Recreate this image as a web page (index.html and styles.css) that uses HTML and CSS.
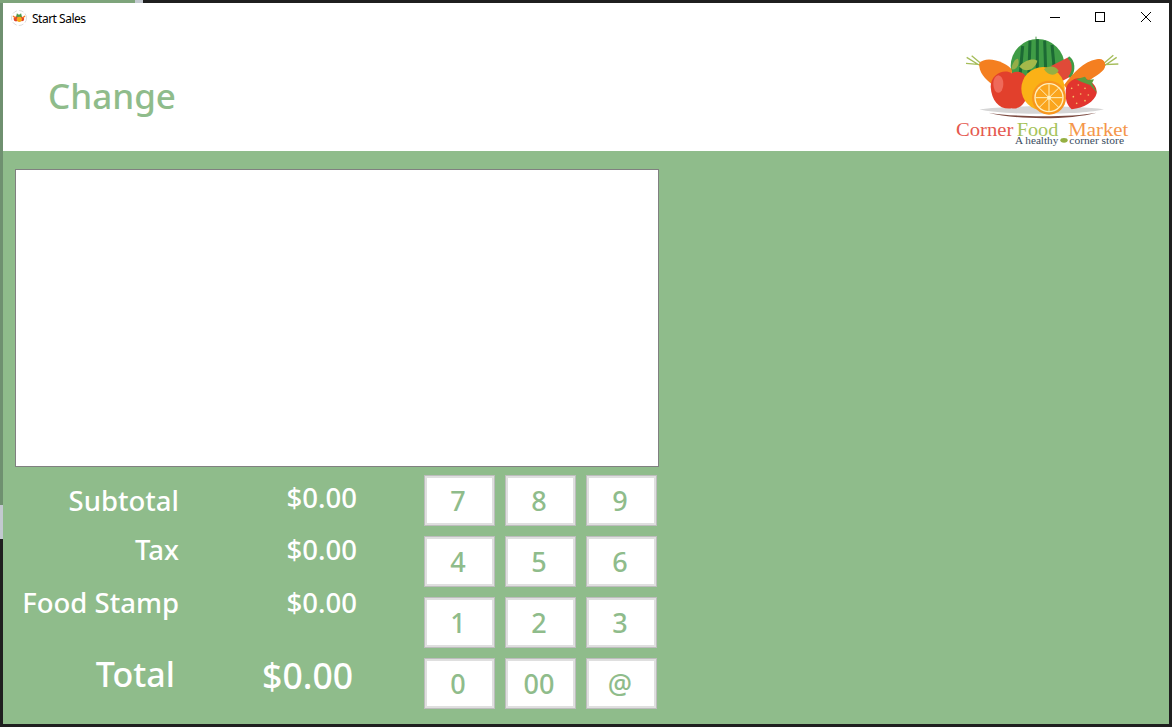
FILE: index.html
```html
<!DOCTYPE html>
<html lang="en">
<head>
    <meta charset="UTF-8">
    <title>Start Sales</title>
    <link rel="stylesheet" href="styles.css">
</head>
<body>
<div class="window">
    <div class="titlebar">
        <svg class="app-icon" width="16" height="16" viewBox="0 0 16 16">
            <circle cx="8" cy="8" r="7.5" fill="#fff" stroke="#bbb" stroke-width="0.5" stroke-dasharray="5 2"/>
            <path d="M6 3 C7 5 9 5 10 3 L11 7 L5 7z" fill="#4f9a4a"/>
            <circle cx="5" cy="9" r="2.4" fill="#e0452c"/>
            <circle cx="11" cy="9" r="2.2" fill="#e0452c"/>
            <circle cx="8.3" cy="9.3" r="2.6" fill="#f7a81b"/>
            <path d="M2 6 L4.5 8 M14 6 L11.5 8" stroke="#f47b20" stroke-width="1.4"/>
        </svg>
        <span class="title">Start Sales</span>
        <div class="win-controls">
            <svg width="46" height="28" viewBox="0 0 46 28"><path d="M19 14.5h10" stroke="#000"/></svg>
            <svg width="46" height="28" viewBox="0 0 46 28"><rect x="18.5" y="9.5" width="9" height="9" fill="none" stroke="#000"/></svg>
            <svg width="46" height="28" viewBox="0 0 46 28"><path d="M18 9l10 10M28 9l-10 10" stroke="#000"/></svg>
        </div>
    </div>

    <header class="header">
        <h1>Change</h1>
        <svg class="logo" width="185" height="120" viewBox="0 0 555 360">
            <!-- plate -->
            <path d="M88 238 C180 226 370 226 462 238 C400 256 150 256 88 238z" fill="#d6d6d6"/>
            <path d="M115 248 C200 262 360 262 440 248 C360 270 200 270 115 248z" fill="#7b4a40"/>
            <!-- carrot greens -->
            <path d="M92 104 L48 100 M92 100 L65 77 M92 108 L50 82" stroke="#a5bd5a" stroke-width="4" fill="none"/>
            <path d="M462 104 L505 102 M462 100 L490 76 M462 108 L500 82" stroke="#a5bd5a" stroke-width="4" fill="none"/>
            <!-- watermelon -->
            <circle cx="263" cy="108" r="81" fill="#3f9c46"/>
            <path d="M258 20 L258 34" stroke="#4f9a4a" stroke-width="3"/>
            <path d="M208 160 L218 48 M236 150 L240 32 M262 150 L262 28 M288 150 L284 32 M316 150 L306 45" stroke="#1c6a34" stroke-width="9" fill="none"/>
            <path d="M303 108 L355 82 L372 112 L358 142 L338 152z" fill="#e04a38"/>
            <path d="M355 82 C370 92 376 120 358 142" stroke="#3f9c46" stroke-width="8" fill="none"/>
            <!-- carrots -->
            <path d="M88 100 C100 85 130 85 160 100 C180 110 190 120 185 130 L130 165 C105 150 85 125 88 100z" fill="#f47f20"/>
            <path d="M465 100 C470 120 450 130 420 150 L350 176 L342 165 C370 130 400 95 440 88 C455 85 462 90 465 100z" fill="#f47f20"/>
            <!-- apple -->
            <path d="M122 170 C122 130 165 115 185 130 C210 118 235 130 235 170 C235 215 210 240 185 235 C150 240 125 215 122 170z" fill="#e2402c"/>
            <ellipse cx="145" cy="162" rx="15" ry="26" fill="#ef6a5a"/>
            <!-- leaves -->
            <path d="M208 110 C225 88 250 85 262 92 C258 112 232 134 208 110z" fill="#a4b94a"/>
            <path d="M184 118 C186 100 196 85 204 86 C210 100 202 122 184 118z" fill="#94ad48"/>
            <!-- yellow fruit -->
            <circle cx="279" cy="176" r="65" fill="#fbb116"/>
            <path d="M282 118 C295 106 315 106 326 122 C316 140 294 138 282 118z" fill="#95b042"/>
            <!-- strawberry -->
            <path d="M347 190 C345 160 370 140 400 145 C425 150 442 170 440 190 C435 215 400 235 365 238 C350 225 347 210 347 190z" fill="#e2352e"/>
            <g fill="#f4c56a">
                <circle cx="365" cy="175" r="2.5"/><circle cx="385" cy="165" r="2.5"/><circle cx="405" cy="175" r="2.5"/>
                <circle cx="370" cy="200" r="2.5"/><circle cx="392" cy="192" r="2.5"/><circle cx="415" cy="195" r="2.5"/>
                <circle cx="380" cy="220" r="2.5"/><circle cx="405" cy="212" r="2.5"/>
            </g>
            <path d="M378 148 L405 140 L412 150 L432 148 L426 160 L442 190 L420 165 L395 156z" fill="#5c9c3f"/>
            <!-- orange slice -->
            <circle cx="297" cy="203" r="51" fill="#f8961d"/>
            <circle cx="297" cy="203" r="44" fill="#fff0c0"/>
            <circle cx="297" cy="203" r="40" fill="#fba51d"/>
            <path d="M297 163v80M257 203h80M269 175l56 56M325 175l-56 56" stroke="#fff0c0" stroke-width="3"/>
            <circle cx="297" cy="203" r="6" fill="#fff0c0"/>
            <!-- wordmark -->
            <text class="logo-word" x="18" y="317" fill="#e5594f" textLength="172" lengthAdjust="spacingAndGlyphs">Corner</text>
            <text class="logo-word" x="200" y="317" fill="#a5c35a" textLength="125" lengthAdjust="spacingAndGlyphs">Food</text>
            <text class="logo-word" x="355" y="317" fill="#f4964a" textLength="180" lengthAdjust="spacingAndGlyphs">Market</text>
            <text class="logo-tag" x="195" y="343" fill="#3a4d61" textLength="130" lengthAdjust="spacingAndGlyphs">A healthy</text>
            <text class="logo-tag" x="358" y="343" fill="#3a4d61" textLength="164" lengthAdjust="spacingAndGlyphs">corner store</text>
            <ellipse cx="342" cy="331" rx="11" ry="7" fill="#95b042"/>
        </svg>
    </header>

    <main class="content">
        <div class="left-col">
            <div class="list-box"></div>
            <div class="bottom">
                <div class="totals">
                    <div class="row subtotal"><span class="lbl">Subtotal</span><span class="amt">$0.00</span></div>
                    <div class="row tax"><span class="lbl">Tax</span><span class="amt">$0.00</span></div>
                    <div class="row stamp"><span class="lbl">Food Stamp</span><span class="amt">$0.00</span></div>
                    <div class="row total"><span class="lbl">Total</span><span class="amt">$0.00</span></div>
                </div>
                <div class="keypad">
                    <button>7</button><button>8</button><button>9</button>
                    <button>4</button><button>5</button><button>6</button>
                    <button>1</button><button>2</button><button>3</button>
                    <button>0</button><button>00</button><button>@</button>
                </div>
            </div>
        </div>
    </main>
</div>
</body>
</html>
```
FILE: styles.css
```css
html, body {
    margin: 0;
    height: 100%;
    overflow: hidden;
}

/* the desktop behind the window shows through its thin border */
body {
    background:
        linear-gradient(#7ea47b, #7ea47b) 0 0 / 135px 3px no-repeat,
        linear-gradient(#c3c9d0, #c3c9d0) 135px 0 / 8px 3px no-repeat,
        linear-gradient(#6f9070, #6f9070) 0 0 / 3px 505px no-repeat,
        linear-gradient(#c3c9d0, #c3c9d0) 0 505px / 3px 34px no-repeat,
        #1f1f1f;
    font-family: "Noto Sans", sans-serif;
}

.window {
    box-sizing: border-box;
    width: 1166px;
    height: 721px;
    margin: 3px;
    display: flex;
    flex-direction: column;
    background-color: #8fbc8b;
}

.titlebar {
    height: 30px;
    background-color: #ffffff;
    display: flex;
    align-items: center;
    padding-left: 8px;
    flex-shrink: 0;
}

.app-icon {
    margin-right: 5px;
}

.title {
    font-size: 12px;
    color: #000000;
    letter-spacing: -0.5px;
}

.win-controls {
    margin-left: auto;
    display: flex;
    height: 28px;
    align-self: flex-start;
}

.header {
    height: 118px;
    background-color: #ffffff;
    display: flex;
    justify-content: space-between;
    flex-shrink: 0;
}

.header h1 {
    margin: 39px 0 0 45px;
    font-size: 35px;
    line-height: 48px;
    font-weight: 500;
    color: #8fbc8b;
}

.logo {
    margin: -3px 34px 0 0;
}

.logo-word {
    font-family: "Liberation Serif", serif;
    font-size: 54px;
}

.logo-tag {
    font-family: "Liberation Serif", serif;
    font-size: 29px;
}

.content {
    flex: 1;
    padding: 18px 0 0 12px;
}

.left-col {
    width: 644px;
}

.list-box {
    box-sizing: border-box;
    height: 298px;
    background-color: #ffffff;
    border: 1px solid #808080;
}

.bottom {
    display: flex;
    justify-content: space-between;
    margin-top: 8px;
}

.totals {
    width: 354px;
    padding-top: 4px;
}

.row {
    display: flex;
    color: #ffffff;
    font-size: 27.5px;
    font-weight: 500;
}

.row .lbl {
    width: 164px;
    text-align: right;
}

.row .amt {
    width: 178px;
    text-align: right;
}

.subtotal { height: 52px; }
.subtotal .lbl { padding-top: 3px; }
.tax { height: 53px; }
.stamp { height: 56px; }

.total {
    margin-top: 11px;
}

.total .lbl {
    width: 160px;
    font-size: 34px;
}

.total .amt {
    font-size: 35.5px;
}

.keypad {
    display: grid;
    grid-template-columns: repeat(3, 71px);
    grid-auto-rows: 51px;
    gap: 10px;
    margin-right: 2px;
}

.keypad button {
    background-color: #ffffff;
    border: 1px solid #bdbdbd;
    box-shadow: inset 0 0 0 2px #dfdfdf;
    color: #8fbc8b;
    font-family: "Noto Sans", sans-serif;
    font-size: 27px;
    font-weight: 500;
    padding: 0 3px 0 0;
}
```
